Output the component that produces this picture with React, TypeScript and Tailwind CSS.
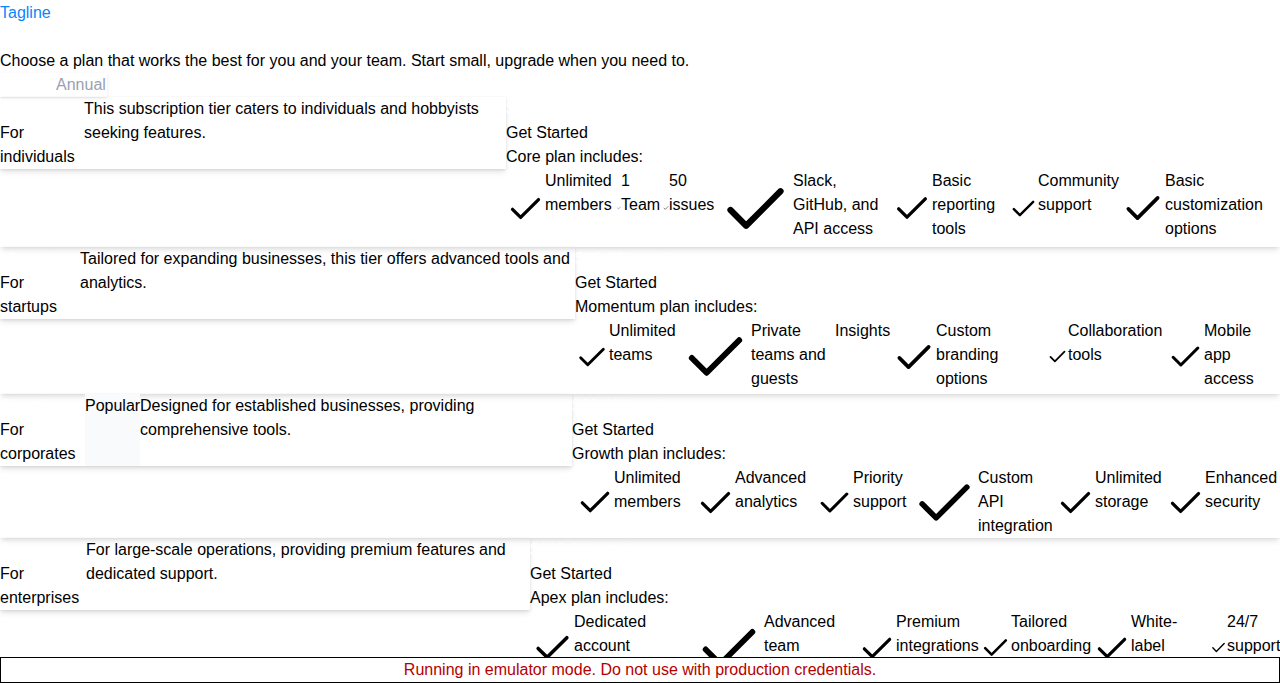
import React from "react";

type Feature = { label: string; icon?: string; text: string };

type Plan = {
  name: string;
  audience: string;
  description: string;
  price: string;
  badge?: string;
  box: string;
  nameCol: string;
  descCol: string;
  list: string;
  features: Feature[];
};

const plans: Plan[] = [
  {
    name: "Core",
    audience: "For individuals",
    description:
      "This subscription tier caters to individuals and hobbyists seeking features.",
    price: "$19.00/month",
    box: "w-[506px]",
    nameCol: "w-[84px]",
    descCol: "w-[422px]",
    list: "h-[78px]",
    features: [
      { label: "Unlimited members", icon: "w-[39px] h-[39px]", text: "w-[72px]" },
      { label: "1 Team", icon: "w-[4px] h-[4px]", text: "w-[42px]" },
      { label: "50 issues", icon: "w-[6px] h-[6px]", text: "w-[49px]" },
      { label: "Slack, GitHub, and API access", icon: "w-[75px] h-[75px]", text: "w-[99px]" },
      { label: "Basic reporting tools", icon: "w-[40px] h-[40px]", text: "w-[77px]" },
      { label: "Community support", icon: "w-[29px] h-[29px]", text: "w-[83px]" },
      { label: "Basic customization options", icon: "w-[44px] h-[44px]", text: "w-[115px]" },
    ],
  },
  {
    name: "Momentum",
    audience: "For startups",
    description:
      "Tailored for expanding businesses, this tier offers advanced tools and analytics.",
    price: "$49.00/month",
    box: "w-[575px]",
    nameCol: "w-[80px]",
    descCol: "w-[495px]",
    list: "h-[75px]",
    features: [
      { label: "Unlimited teams", icon: "w-[34px] h-[34px]", text: "w-[71px]" },
      { label: "Private teams and guests", icon: "w-[71px] h-[71px]", text: "w-[84px]" },
      { label: "Insights", text: "w-[57px]" },
      { label: "Custom branding options", icon: "w-[44px] h-[44px]", text: "w-[111px]" },
      { label: "Collaboration tools", icon: "w-[21px] h-[21px]", text: "w-[99px]" },
      { label: "Mobile app access", icon: "w-[37px] h-[37px]", text: "w-[76px]" },
    ],
  },
  {
    name: "Growth",
    audience: "For corporates",
    description: "Designed for established businesses, providing comprehensive tools.",
    price: "$99.00/month",
    badge: "Popular",
    box: "w-[572px]",
    nameCol: "w-[85px]",
    descCol: "w-[432px]",
    list: "h-[72px] pl-[4px]",
    features: [
      { label: "Unlimited members", icon: "w-[38px] h-[38px]", text: "w-[82px]" },
      { label: "Advanced analytics", icon: "w-[39px] h-[39px]", text: "w-[81px]" },
      { label: "Priority support", icon: "w-[37px] h-[37px]", text: "w-[58px]" },
      { label: "Custom API integration", icon: "w-[67px] h-[67px]", text: "w-[78px]" },
      { label: "Unlimited storage", icon: "w-[39px] h-[39px]", text: "w-[71px]" },
      { label: "Enhanced security", icon: "w-[39px] h-[39px]", text: "w-[75px]" },
    ],
  },
  {
    name: "Apex",
    audience: "For enterprises",
    description:
      "For large-scale operations, providing premium features and dedicated support.",
    price: "$199.00/month",
    box: "w-[530px]",
    nameCol: "w-[86px]",
    descCol: "w-[444px]",
    list: "h-[75px] pl-px",
    features: [
      { label: "Dedicated account manager", icon: "w-[43px] h-[43px]", text: "w-[120px]" },
      { label: "Advanced team management", icon: "w-[70px] h-[70px]", text: "w-[94px]" },
      { label: "Premium integrations", icon: "w-[38px] h-[38px]", text: "w-[84px]" },
      { label: "Tailored onboarding", icon: "w-[31px] h-[31px]", text: "w-[82px]" },
      { label: "White-label solutions", icon: "w-[38px] h-[38px]", text: "w-[79px]" },
      { label: "24/7 support", icon: "w-[17px] h-[17px]", text: "w-[53px]" },
    ],
  },
];

const Check = ({ className }: { className: string }) => (
  <svg
    xmlns="http://www.w3.org/2000/svg"
    viewBox="0 0 24 24"
    fill="none"
    stroke="currentColor"
    strokeWidth={2}
    strokeLinecap="round"
    strokeLinejoin="round"
    className={`shrink-0 ${className}`}
  >
    <path d="M20 6.5 9 17.5l-5-5" />
  </svg>
);

const PlanCard = ({ plan }: { plan: Plan }) => (
  <div className="flex items-start shadow-md">
    {/* Name + description */}
    <div
      className={`flex shrink-0 shadow-[0_1px_3px_rgba(0,0,0,0.1),0_4px_6px_-1px_rgba(0,0,0,0.1)] ${plan.box}`}
    >
      <div className={`flex shrink-0 flex-col ${plan.nameCol}`}>
        <h3 className="text-white">{plan.name}</h3>
        <p>{plan.audience}</p>
      </div>
      {plan.badge && (
        <span className="w-[55px] shrink-0 self-stretch bg-gray-50">{plan.badge}</span>
      )}
      <p className={`shrink-0 ${plan.descCol}`}>{plan.description}</p>
    </div>

    {/* Price + features */}
    <div className="flex min-w-0 flex-1 flex-col">
      <p className="text-white">{plan.price}</p>
      <button type="button" className="self-start text-left">
        Get Started
      </button>
      <p>{plan.name} plan includes:</p>
      <ul className={`flex ${plan.list}`}>
        {plan.features.map((f) => (
          <li key={f.label} className="flex shrink-0 items-center">
            {f.icon && <Check className={f.icon} />}
            <span className={`shrink-0 self-start ${f.text}`}>{f.label}</span>
          </li>
        ))}
      </ul>
    </div>
  </div>
);

export default function App() {
  return (
    <div className="min-h-screen bg-white pt-px font-['Liberation_Sans',Arial,sans-serif] text-base leading-6 text-black">
      {/* Header */}
      <p className="text-[#0a84ff]">Tagline</p>
      <h2 className="text-white">Pricing</h2>
      <p>Choose a plan that works the best for you and your team. Start small, upgrade when you need to.</p>
      <div className="flex w-fit pr-px shadow-sm">
        <span className="text-white">Monthly</span>
        <span className="text-gray-400">Annual</span>
      </div>

      {/* Plans */}
      <div className="flex flex-col">
        {plans.map((p) => (
          <PlanCard key={p.name} plan={p} />
        ))}
      </div>

      <p className="fixed bottom-0 left-0 m-0 w-full border-[1.6px] border-black bg-white text-center text-[#b50000]">
        Running in emulator mode. Do not use with production credentials.
      </p>
    </div>
  );
}
